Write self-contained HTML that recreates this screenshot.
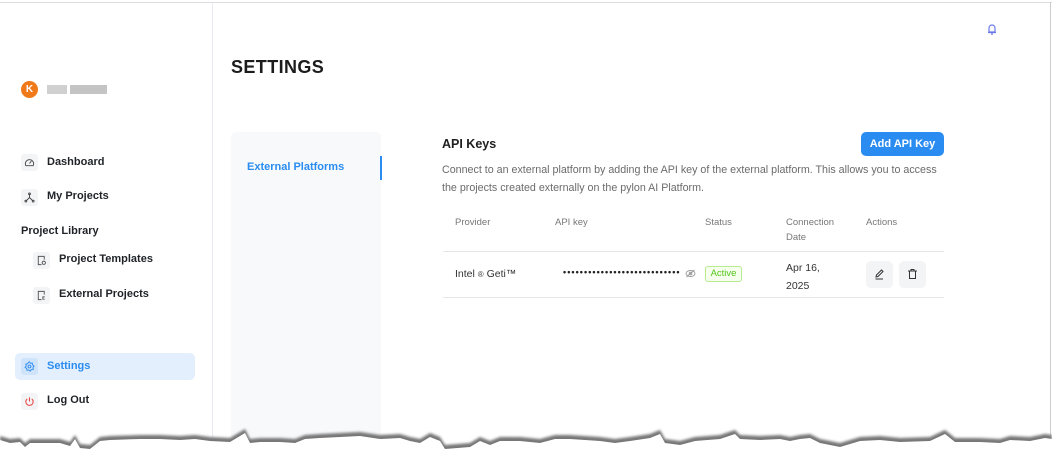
<!DOCTYPE html>
<html><head><meta charset="utf-8"><style>
*{margin:0;padding:0;box-sizing:border-box}
body{width:1052px;height:458px;overflow:hidden;background:#fff;font-family:"Liberation Sans",sans-serif;position:relative;color:#1f1f1f}
.a{position:absolute}
.ico{position:absolute;width:17px;height:17px;background:#f3f4f6;border-radius:3px;display:flex;align-items:center;justify-content:center}
.nav{position:absolute;font-size:11px;font-weight:bold;color:#1f2328}
.th{position:absolute;font-size:9.5px;color:#777;line-height:15px}
</style></head><body>
<div class="a" style="left:0;top:2px;width:1052px;height:1px;background:#ddd"></div>
<div class="a" style="left:1050px;top:2px;width:1px;height:440px;background:#ccc"></div>
<div class="a" style="left:212px;top:3px;width:1px;height:440px;background:#e8ecf2"></div>

<div class="a" style="left:21px;top:81px;width:17px;height:17px;border-radius:50%;background:#f07a1a;color:#fff;font-size:10px;font-weight:bold;text-align:center;line-height:17px">K</div>
<div class="a" style="left:47px;top:85px;width:20px;height:9px;background:#d0d0d0"></div>
<div class="a" style="left:70px;top:85px;width:37px;height:9px;background:#c4c4c4"></div>

<div class="ico" style="left:21px;top:154px"><svg width="11" height="11" viewBox="0 0 12 12" fill="none" stroke="#444" stroke-width="1"><path d="M2 9.5A4.5 4.5 0 1 1 10 9.5Z"/><path d="M6 7L8 4.5"/></svg></div>
<div class="nav" style="left:47px;top:156px">Dashboard</div>
<div class="ico" style="left:21px;top:189px"><svg width="11" height="11" viewBox="0 0 12 12" fill="none" stroke="#444" stroke-width="1"><path d="M6 2V6L2.5 9.5M6 6L9.5 9.5"/><circle cx="6" cy="2" r="1"/><circle cx="2" cy="10" r="1"/><circle cx="10" cy="10" r="1"/></svg></div>
<div class="nav" style="left:47px;top:190px">My Projects</div>
<div class="nav" style="left:21px;top:225px">Project Library</div>
<div class="ico" style="left:33px;top:252px"><svg width="11" height="11" viewBox="0 0 12 12" fill="none" stroke="#555" stroke-width="1"><path d="M9 5V1.5H2.5V10.5H6"/><circle cx="8.5" cy="8.5" r="1.8"/></svg></div>
<div class="nav" style="left:59px;top:253px">Project Templates</div>
<div class="ico" style="left:33px;top:287px"><svg width="11" height="11" viewBox="0 0 12 12" fill="none" stroke="#555" stroke-width="1"><path d="M9 5V1.5H2.5V10.5H6"/><path d="M9.5 7.5H7.5V10H9.5"/></svg></div>
<div class="nav" style="left:59px;top:288px">External Projects</div>

<div class="a" style="left:15px;top:353px;width:180px;height:27px;background:#e3effc;border-radius:5px"></div>
<div class="ico" style="left:21px;top:358px;background:#cfe3fa"><svg width="11" height="11" viewBox="0 0 12 12" fill="none" stroke="#2a8cf0" stroke-width="1"><circle cx="6" cy="6" r="1.6"/><path d="M6 1L7 2.5L9 2.2L9.3 4.2L11 5.5L9.8 7L10.2 9L8.2 9.3L6.9 11L5.3 9.8L3.3 10.2L3 8.2L1.2 7L2.4 5.4L2 3.4L4 3L5 1.2Z"/></svg></div>
<div class="nav" style="left:47px;top:360px;color:#2a8cf0">Settings</div>
<div class="ico" style="left:21px;top:393px"><svg width="11" height="11" viewBox="0 0 12 12" fill="none" stroke="#e84a4a" stroke-width="1.2"><path d="M6 1.5V6"/><path d="M3.5 3.2A4 4 0 1 0 8.5 3.2"/></svg></div>
<div class="nav" style="left:47px;top:394px">Log Out</div>

<div class="a" style="left:231px;top:57px;font-size:18px;font-weight:bold;letter-spacing:0.4px;color:#1c1c1c">SETTINGS</div>
<svg class="a" style="left:985px;top:22px" width="14" height="14" viewBox="0 0 14 14" fill="none" stroke="#6b78e8" stroke-width="1.2"><path d="M4 10V6A3 3 0 0 1 10 6V10ZM3 10.5H11M6 12H8M7 2.5V3"/></svg>

<div class="a" style="left:231px;top:132px;width:150px;height:320px;background:#f7f9fb;border-radius:5px 5px 0 0"></div>
<div class="a" style="left:380px;top:156px;width:2px;height:24px;background:#2a8cf0"></div>
<div class="a" style="left:247px;top:161px;font-size:11px;font-weight:bold;color:#2a8cf0">External Platforms</div>

<div class="a" style="left:442px;top:137px;font-size:12.5px;font-weight:bold;color:#1f1f1f">API Keys</div>
<div class="a" style="left:861px;top:132px;width:83px;height:24px;background:#2a8cf0;border-radius:5px;color:#fff;font-size:11px;font-weight:bold;text-align:center;line-height:24px">Add API Key</div>
<div class="a" style="left:442px;top:161px;width:498px;font-size:10.7px;line-height:18px;color:#6b6b6b">Connect to an external platform by adding the API key of the external platform. This allows you to access the projects created externally on the pylon AI Platform.</div>

<div class="th" style="left:455px;top:215px">Provider</div>
<div class="th" style="left:555px;top:215px">API key</div>
<div class="th" style="left:705px;top:215px">Status</div>
<div class="th" style="left:786px;top:215px">Connection<br>Date</div>
<div class="th" style="left:866px;top:215px">Actions</div>
<div class="a" style="left:443px;top:251px;width:501px;height:1px;background:#e6e6e6"></div>

<div class="a" style="left:455px;top:268px;font-size:10.5px;color:#333">Intel <span style="font-size:8px">®</span> Geti™</div>
<div class="a" style="left:563px;top:267px;font-size:9px;font-weight:bold;letter-spacing:1.05px;color:#222;white-space:nowrap">••••••••••••••••••••••••••••</div>
<svg class="a" style="left:685px;top:269px" width="11" height="9" viewBox="0 0 11 9" fill="none" stroke="#999" stroke-width="0.9"><ellipse cx="5.5" cy="4.5" rx="4.5" ry="3"/><circle cx="5.5" cy="4.5" r="1.3"/><path d="M1.5 8L9.5 1"/></svg>
<div class="a" style="left:705px;top:266px;width:37px;height:16px;border:1px solid #b7eb8f;background:#f6ffed;border-radius:3px;font-size:9.5px;color:#52c41a;text-align:center;line-height:14px">Active</div>
<div class="a" style="left:786px;top:259px;font-size:10.5px;line-height:18px;color:#333">Apr 16,<br>2025</div>
<div class="a" style="left:866px;top:261px;width:27px;height:27px;background:#f3f4f6;border-radius:5px"></div>
<svg class="a" style="left:874px;top:269px" width="11" height="11" viewBox="0 0 11 11" fill="none" stroke="#333" stroke-width="1"><path d="M2 8L2.5 6L7.5 1L9 2.5L4 7.5Z M1.5 10H9"/></svg>
<div class="a" style="left:899px;top:261px;width:27px;height:27px;background:#f3f4f6;border-radius:5px"></div>
<svg class="a" style="left:907px;top:268px" width="11" height="12" viewBox="0 0 11 12" fill="none" stroke="#333" stroke-width="1"><path d="M1 3H10M4 3V1.5H7V3M2.5 3V10.5H8.5V3"/></svg>
<div class="a" style="left:443px;top:297px;width:501px;height:1px;background:#e6e6e6"></div>

<svg class="a" style="left:0;top:425px" width="1052" height="33" viewBox="0 0 1052 33">
<defs><filter id="b"><feGaussianBlur stdDeviation="1.2"/></filter></defs>
<path fill="#777" filter="url(#b)" d="M0 11L10 14L20 13L25 18L30 14L45 14L60 14L70 17L75 10L80 19L90 20L100 12L110 11L140 10L160 10L180 11L195 10L210 12L230 13L245 4L250 14L260 13L280 13L295 14L305 10L320 9L340 8L360 7L380 10L400 9L410 12L420 14L430 8L440 12L445 20L470 18L480 12L490 16L500 12L520 12L540 14L555 10L570 10L600 12L615 14L630 12L650 9L660 5L665 14L680 16L695 12L720 10L735 5L740 10L760 11L780 10L790 12L800 10L810 9L820 14L840 18L860 12L880 11L900 13L930 12L945 5L955 13L980 13L1000 14L1010 11L1030 12L1045 9L1052 10V35H0Z"/>
<path fill="#fff" d="M0 15L10 18L20 17L25 22L30 18L45 18L60 18L70 21L75 14L80 23L90 24L100 16L110 15L140 14L160 14L180 15L195 14L210 16L230 17L245 8L250 18L260 17L280 17L295 18L305 14L320 13L340 12L360 11L380 14L400 13L410 16L420 18L430 12L440 16L445 24L470 22L480 16L490 20L500 16L520 16L540 18L555 14L570 14L600 16L615 18L630 16L650 13L660 9L665 18L680 20L695 16L720 14L735 9L740 14L760 15L780 14L790 16L800 14L810 13L820 18L840 22L860 16L880 15L900 17L930 16L945 9L955 17L980 17L1000 18L1010 15L1030 16L1045 13L1052 14V35H0Z"/>
</svg>
</body></html>
